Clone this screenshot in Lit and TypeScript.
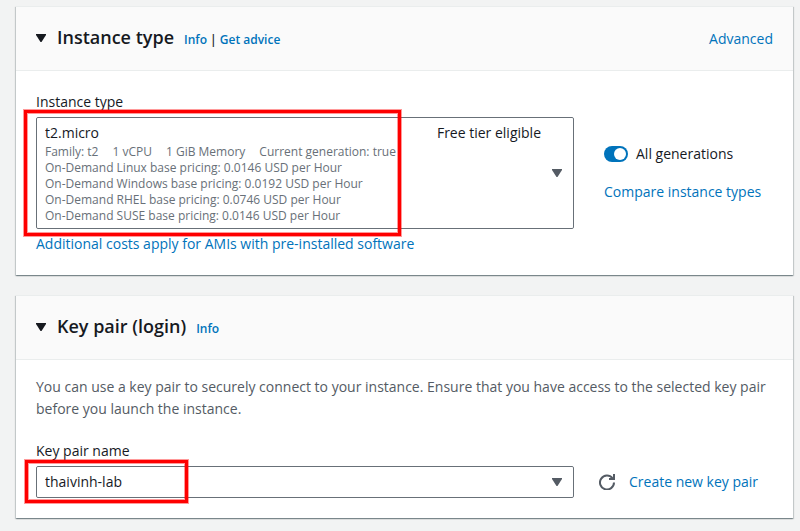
import { LitElement, html, css, svg } from "lit";
import { customElement, property, state } from "lit/decorators.js";

const caret = svg`<path d="M0 0h10v1L5.500 8h-1L0 1z" fill="currentColor"></path>`;

@customElement("form-card")
class FormCard extends LitElement {
  @property() heading = "";
  @state() private open = true;

  static styles = css`
    :host {
      display: block;
      background: #fff;
      border-top: 1px solid #eaeded;
      box-shadow:
        0 1px 1px 0 rgba(0, 28, 36, 0.3),
        1px 1px 1px 0 rgba(0, 28, 36, 0.15),
        -1px 1px 1px 0 rgba(0, 28, 36, 0.15);
    }
    .header {
      display: flex;
      align-items: center;
      justify-content: space-between;
      height: 63px;
      padding: 0 20px;
      background: #fafafa;
      border-bottom: 1px solid #eaeded;
    }
    .title {
      display: flex;
      align-items: baseline;
    }
    .toggle {
      display: flex;
      align-self: center;
      margin: 0 11px 0 0;
      padding: 0 0 2px;
      border: 0;
      background: none;
      color: #16191f;
      cursor: pointer;
    }
    .closed svg {
      transform: rotate(-90deg);
    }
    h2 {
      margin: 0 10px 0 0;
      font-size: 18px;
      line-height: 22px;
      font-weight: 600;
    }
    .body {
      padding: 16px 20px 20px;
    }
  `;

  render() {
    return html`
      <div class="header">
        <div class="title">
          <button
            class="toggle ${this.open ? "" : "closed"}"
            aria-label=${this.heading}
            aria-expanded=${this.open}
            @click=${() => (this.open = !this.open)}
          >
            <svg width="10" height="8" viewBox="0 0 10 8">${caret}</svg>
          </button>
          <h2>${this.heading}</h2>
          <slot name="info"></slot>
        </div>
        <slot name="actions"></slot>
      </div>
      ${this.open ? html`<div class="body"><slot></slot></div>` : ""}
    `;
  }
}

@customElement("app-root")
class AppRoot extends LitElement {
  static styles = css`
    :host {
      display: flex;
      flex-direction: column;
      gap: 20px;
      box-sizing: border-box;
      min-height: 100vh;
      padding: 6px 7px 12px 16px;
      background: #f2f3f3;
      color: #16191f;
      font: 14px/22px "Open Sans", "Noto Sans", sans-serif;
    }
    a {
      color: #0073bb;
      text-decoration: none;
    }
    .info {
      font-size: 12px;
      font-weight: 600;
    }
    .grid {
      display: grid;
      grid-template-columns: minmax(0, 1fr) 169px;
      column-gap: 30px;
      padding-top: 4px;
    }
    .label {
      display: block;
      margin-bottom: 4px;
    }
    .field {
      position: relative;
      display: grid;
      border: 1px solid #687078;
      border-radius: 2px;
      align-items: center;
    }
    .field > * {
      grid-area: 1 / 1;
    }
    select {
      appearance: none;
      align-self: stretch;
      min-width: 0;
      height: 30px;
      margin: 0;
      padding: 4px 30px 4px 8px;
      border: 0;
      border-radius: 2px;
      background: #fff;
      color: #16191f;
      font: inherit;
    }
    .rich select {
      height: auto;
      padding-bottom: 84px;
    }
    .caret {
      justify-self: end;
      margin-right: 11px;
      color: #545b64;
      pointer-events: none;
    }
    .option {
      padding: 4px 32px 4px 8px;
      color: #687078;
      font-size: 12px;
      line-height: 16px;
      pointer-events: none;
    }
    .tier {
      color: #16191f;
      font-size: 14px;
      line-height: 22px;
      text-align: right;
    }
    .tags {
      display: flex;
      gap: 14px;
    }
    .mark {
      position: absolute;
      box-sizing: border-box;
      border: 3px solid #fe0000;
      box-shadow:
        0 0 0 1px rgba(254, 0, 0, 0.4),
        inset 0 0 0 1px rgba(254, 0, 0, 0.4);
      pointer-events: none;
    }
    .mark-type {
      inset: -8px auto -8px -13px;
      width: 377px;
    }
    .mark-key {
      inset: -7px auto -6px -12px;
      width: 163px;
    }
    .costs {
      display: block;
      margin-top: 4px;
    }
    .side {
      display: flex;
      flex-direction: column;
      gap: 16px;
      padding-top: 52px;
      white-space: nowrap;
    }
    .switch {
      display: flex;
      align-items: center;
      gap: 8px;
    }
    .switch input {
      appearance: none;
      display: flex;
      align-items: center;
      width: 24px;
      height: 16px;
      margin: 0;
      padding: 2px;
      border-radius: 8px;
      background: #687078;
    }
    .switch input::before {
      content: "";
      width: 12px;
      height: 12px;
      border-radius: 50%;
      background: #fff;
    }
    .switch input:checked {
      justify-content: flex-end;
      background: #0073bb;
    }
    p {
      margin: 0 0 16px;
      color: #545b64;
    }
    .key-side {
      display: flex;
      align-items: center;
      align-self: end;
      height: 32px;
      gap: 14px;
      margin-left: -5px;
      white-space: nowrap;
    }
    .refresh {
      display: flex;
      padding: 0;
      border: 0;
      background: none;
      color: #545b64;
      cursor: pointer;
    }
  `;

  private systems = [
    ["Linux", "0.0146"],
    ["Windows", "0.0192"],
    ["RHEL", "0.0746"],
    ["SUSE", "0.0146"],
  ];

  private caretIcon() {
    return html`<svg class="caret" width="10" height="8" viewBox="0 0 10 8">${caret}</svg>`;
  }

  render() {
    return html`
      <form-card heading="Instance type">
        <span slot="info" class="info"><a href="#info">Info</a> | <a href="#advice">Get advice</a></span>
        <a slot="actions" href="#advanced">Advanced</a>
        <div class="grid">
          <div>
            <label class="label" for="type">Instance type</label>
            <div class="field rich">
              <select id="type">
                <option>t2.micro</option>
              </select>
              <div class="option">
                <div class="tier">Free tier eligible</div>
                <div class="tags">
                  <span>Family: t2</span><span>1 vCPU</span><span>1 GiB Memory</span
                  ><span>Current generation: true</span>
                </div>
                ${this.systems.map(
                  ([os, price]) => html`<div>On-Demand ${os} base pricing: ${price} USD per Hour</div>`
                )}
              </div>
              ${this.caretIcon()}
              <div class="mark mark-type"></div>
            </div>
            <a class="costs" href="#costs">Additional costs apply for AMIs with pre-installed software</a>
          </div>
          <div class="side">
            <label class="switch"><input type="checkbox" role="switch" checked />All generations</label>
            <a href="#compare">Compare instance types</a>
          </div>
        </div>
      </form-card>

      <form-card heading="Key pair (login)">
        <a slot="info" class="info" href="#key-info">Info</a>
        <p>
          You can use a key pair to securely connect to your instance. Ensure that you have access to the selected
          key pair before you launch the instance.
        </p>
        <div class="grid">
          <div>
            <label class="label" for="key">Key pair name</label>
            <div class="field">
              <select id="key">
                <option>thaivinh-lab</option>
              </select>
              ${this.caretIcon()}
              <div class="mark mark-key"></div>
            </div>
          </div>
          <div class="key-side">
            <button class="refresh" aria-label="Refresh key pairs">
              <svg width="16" height="16" viewBox="0 0 16 16" fill="none" stroke="currentColor" stroke-width="2">
                <path d="M15 8.500A7 7 0 1 1 13.500 4.200M15 0v5h-5"></path>
              </svg>
            </button>
            <a href="#create">Create new key pair</a>
          </div>
        </div>
      </form-card>
    `;
  }
}
